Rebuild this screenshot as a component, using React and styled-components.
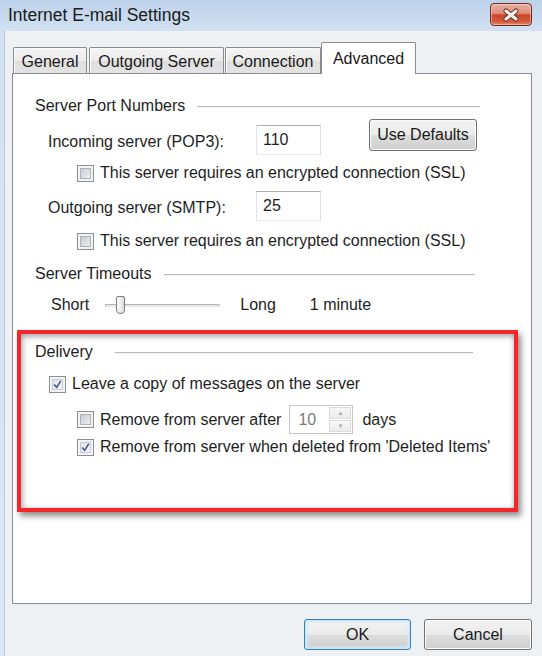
import styled, { createGlobalStyle } from 'styled-components';

const GlobalStyle = createGlobalStyle`
  html, body {
    margin: 0;
    padding: 0;
  }
  body {
    width: 542px;
    height: 656px;
    overflow: hidden;
    font-family: "Liberation Sans", Arial, sans-serif;
    color: #1e1e1e;
  }
`;

const tabs = [
  { label: 'General', width: 74, gap: 1 },
  { label: 'Outgoing Server', width: 135, gap: 2 },
  { label: 'Connection', width: 96, gap: 1 },
  { label: 'Advanced', width: 95, gap: 0, active: true },
];

const CloseIcon = () => (
  <svg width="18" height="14" viewBox="0 0 18 14">
    <path d="M4 3 L14 11 M14 3 L4 11" stroke="#7a2a1c" strokeWidth="5" strokeLinecap="round" />
    <path d="M4 3 L14 11 M14 3 L4 11" stroke="#fff" strokeWidth="3" strokeLinecap="round" />
  </svg>
);

const CheckMark = () => (
  <svg width="11" height="11" viewBox="0 0 11 11">
    <path d="M1.5 5.5 L4.5 9 L9.5 1" fill="none" stroke="#3b4f8c" strokeWidth="1.8" />
  </svg>
);

const Check = ({ checked, indent, top, children }) => (
  <CheckRow $indent={indent} $top={top}>
    <Box>
      <BoxInner $checked={checked}>{checked && <CheckMark />}</BoxInner>
    </Box>
    <CheckLabel>{children}</CheckLabel>
  </CheckRow>
);

const App = () => {
  return (
    <Window>
      <GlobalStyle />
      <TitleBar>
        <Title>Internet E-mail Settings</Title>
        <CloseButton>
          <CloseIcon />
        </CloseButton>
      </TitleBar>
      <Client>
        <TabStrip>
          {tabs.map(tab => (
            <Tab key={tab.label} $width={tab.width} $gap={tab.gap} $active={tab.active}>
              {tab.label}
            </Tab>
          ))}
        </TabStrip>
        <Panel>
          <Group>
            <GroupHeader $top={22}>
              Server Port Numbers
              <HeaderLine $gap={12} />
            </GroupHeader>
            <FieldRow $top={9}>
              <FieldLabel>Incoming server (POP3):</FieldLabel>
              <PortInput defaultValue="110" />
              <PushButton $width={108} $height={32} $lift={-6} $left={48}>
                Use Defaults
              </PushButton>
            </FieldRow>
            <Check indent={42} top={8}>
              This server requires an encrypted connection (SSL)
            </Check>
            <FieldRow $top={8}>
              <FieldLabel>Outgoing server (SMTP):</FieldLabel>
              <PortInput defaultValue="25" />
            </FieldRow>
            <Check indent={42} top={10}>
              This server requires an encrypted connection (SSL)
            </Check>
            <GroupHeader $top={13}>
              Server Timeouts
              <HeaderLine $gap={13} $end={5} />
            </GroupHeader>
            <SliderRow>
              <span>Short</span>
              <Track>
                <Thumb />
              </Track>
              <span>Long</span>
              <Timeout>1 minute</Timeout>
            </SliderRow>
          </Group>
          <Highlight>
            <GroupHeader $top={8}>
              Delivery
              <HeaderLine $gap={22} />
            </GroupHeader>
            <Check checked indent={14} top={12}>
              Leave a copy of messages on the server
            </Check>
            <SpinRow>
              <Box>
                <BoxInner />
              </Box>
              <CheckLabel>Remove from server after</CheckLabel>
              <SpinBox>
                <SpinValue>10</SpinValue>
                <SpinButtons>
                  <SpinHalf>▲</SpinHalf>
                  <SpinHalf>▼</SpinHalf>
                </SpinButtons>
              </SpinBox>
              <Days>days</Days>
            </SpinRow>
            <Check checked indent={42} top={3}>
              Remove from server when deleted from 'Deleted Items'
            </Check>
          </Highlight>
        </Panel>
        <ButtonBar>
          <PushButton $width={107} $height={31} $default>
            OK
          </PushButton>
          <PushButton $width={108} $height={31}>
            Cancel
          </PushButton>
        </ButtonBar>
      </Client>
    </Window>
  );
};

const Window = styled.div`
  width: 542px;
  height: 656px;
  display: flex;
  flex-direction: column;
  background: linear-gradient(to bottom, #bdd1ea 0, #d2e1f2 31px, #dbe7f4 100%);
  overflow: hidden;
`;

const TitleBar = styled.div`
  height: 31px;
  flex-shrink: 0;
  display: flex;
  align-items: flex-start;
  justify-content: space-between;
  padding: 0 10px 0 8px;
  box-sizing: border-box;
`;

const Title = styled.div`
  font-size: 17.5px;
  line-height: 31px;
  color: #1a1a1a;
`;

const CloseButton = styled.div`
  width: 42px;
  height: 23px;
  margin-top: 3px;
  box-sizing: border-box;
  display: flex;
  align-items: center;
  justify-content: center;
  border: 1px solid #6e2a22;
  border-radius: 4px;
  background: linear-gradient(
    to bottom,
    #ebb4a7 0%,
    #de8c78 45%,
    #c9462c 52%,
    #d45c40 85%,
    #e68d70 100%
  );
  box-shadow: inset 0 0 0 1px rgba(255, 220, 210, 0.5);
`;

const Client = styled.div`
  flex: 1;
  margin-left: 4px;
  padding: 11px 0 0 7px;
  border-left: 1px solid #b7c9df;
  background: #eef1f4;
`;

const TabStrip = styled.div`
  display: flex;
  align-items: flex-end;
  height: 31px;
`;

const Tab = styled.div`
  position: relative;
  z-index: ${p => (p.$active ? 1 : 0)};
  width: ${p => p.$width}px;
  height: ${p => (p.$active ? 32 : 26)}px;
  margin-left: ${p => p.$gap}px;
  margin-bottom: ${p => (p.$active ? -1 : 0)}px;
  box-sizing: border-box;
  display: flex;
  align-items: center;
  justify-content: center;
  padding-top: ${p => (p.$active ? 0 : 3)}px;
  border: 1px solid #898c95;
  border-bottom: none;
  border-radius: 2px 2px 0 0;
  font-size: 16px;
  color: #1a1a1a;
  background: ${p =>
    p.$active
      ? '#fff'
      : 'linear-gradient(to bottom, #f4f4f4 0%, #ececec 50%, #dedede 52%, #e4e4e4 100%)'};
  box-shadow: ${p => (p.$active ? 'none' : 'inset 1px 1px 0 #fbfbfb')};
`;

const Panel = styled.div`
  width: 520px;
  height: 531px;
  box-sizing: border-box;
  border: 1px solid #898c95;
  background: #fff;
  display: flex;
  flex-direction: column;
`;

const Group = styled.div`
  padding: 0 51px 0 22px;
`;

const GroupHeader = styled.div`
  display: flex;
  align-items: center;
  height: 20px;
  margin-top: ${p => p.$top}px;
  font-size: 16px;
  color: #1e1e1e;
  white-space: nowrap;
`;

const HeaderLine = styled.div`
  flex: 1;
  height: 1px;
  margin-left: ${p => p.$gap}px;
  margin-right: ${p => p.$end || 0}px;
  background: #b9b9b9;
  box-shadow: 0 1px 0 #f4f4f4;
`;

const FieldRow = styled.div`
  display: flex;
  align-items: center;
  height: 30px;
  margin-top: ${p => p.$top}px;
  padding-left: 13px;
  font-size: 16px;
`;

const FieldLabel = styled.span`
  width: 208px;
  padding-top: 3px;
`;

const PortInput = styled.input`
  width: 65px;
  height: 30px;
  box-sizing: border-box;
  padding: 0 0 0 6px;
  border: 1px solid;
  border-color: #abadb3 #dbdfe6 #e3e9ef #e2e3ea;
  font-family: inherit;
  font-size: 16px;
  color: #1e1e1e;
  background: #fff;
  outline: none;
`;

const PushButton = styled.div`
  width: ${p => p.$width}px;
  height: ${p => p.$height}px;
  margin-left: ${p => p.$left || 0}px;
  align-self: ${p => (p.$lift ? 'flex-start' : 'auto')};
  margin-top: ${p => p.$lift || 0}px;
  box-sizing: border-box;
  display: flex;
  align-items: center;
  justify-content: center;
  font-size: 16px;
  color: #1a1a1a;
  border: 1px solid ${p => (p.$default ? '#3c7fb1' : '#707070')};
  border-radius: 3px;
  background: linear-gradient(to bottom, #f2f2f2 0%, #ebebeb 50%, #dddddd 51%, #cfcfcf 100%);
  box-shadow: ${p =>
    p.$default ? 'inset 0 0 0 1px #c5e6f8, inset 0 0 3px 2px #d4ecf9' : 'inset 0 0 0 1px #fcfcfc'};
`;

const CheckRow = styled.div`
  display: flex;
  align-items: center;
  height: 20px;
  margin-top: ${p => p.$top}px;
  padding-left: ${p => p.$indent}px;
`;

const Box = styled.span`
  width: 17px;
  height: 17px;
  flex-shrink: 0;
  box-sizing: border-box;
  padding: 2px;
  border: 1px solid #8e8f8f;
  background: #f4f4f4;
`;

const BoxInner = styled.span`
  display: flex;
  align-items: center;
  justify-content: center;
  width: 100%;
  height: 100%;
  box-sizing: border-box;
  border: 1px solid ${p => (p.$checked ? '#c5c9d8' : '#aeb3b9')};
  background: ${p =>
    p.$checked
      ? 'linear-gradient(135deg, #dfe2ea, #f6f7f9)'
      : 'linear-gradient(135deg, #c9cdd3, #eceef0)'};
`;

const CheckLabel = styled.span`
  margin-left: 6px;
  font-size: 16px;
  color: #1e1e1e;
  white-space: nowrap;
`;

const SliderRow = styled.div`
  display: flex;
  align-items: center;
  height: 20px;
  margin-top: 11px;
  padding-left: 16px;
  font-size: 16px;
`;

const Track = styled.div`
  position: relative;
  width: 115px;
  height: 3px;
  margin: 0 20px 0 16px;
  box-sizing: border-box;
  border: 1px solid #b4b4b4;
  border-right-color: #d8d8d8;
  border-bottom-color: #e4e4e4;
  background: #ececec;
`;

const Thumb = styled.div`
  position: absolute;
  left: 10px;
  top: -9px;
  width: 9px;
  height: 18px;
  box-sizing: border-box;
  border: 1px solid #7a7a7a;
  border-radius: 2px 2px 4px 4px;
  background: linear-gradient(to right, #fdfdfd, #dedede);
`;

const Timeout = styled.span`
  margin-left: 34px;
`;

const Highlight = styled.div`
  margin: 15px 13px 0 4px;
  padding: 0 41px 51px 14px;
  border: 4px solid #f4262c;
  box-shadow: 3px 4px 6px rgba(0, 0, 0, 0.45), inset 1px 2px 6px rgba(0, 0, 0, 0.4);
`;

const SpinRow = styled.div`
  display: flex;
  align-items: center;
  height: 29px;
  margin-top: 11px;
  padding-left: 42px;
  font-size: 16px;
`;

const SpinBox = styled.div`
  display: flex;
  width: 64px;
  height: 29px;
  margin-left: 8px;
  box-sizing: border-box;
  border: 1px solid #c6c8cc;
  background: #fff;
`;

const SpinValue = styled.span`
  flex: 1;
  display: flex;
  align-items: center;
  padding-left: 8px;
  font-size: 16px;
  color: #7a7a7a;
`;

const SpinButtons = styled.div`
  width: 22px;
  margin: 1px;
  display: flex;
  flex-direction: column;
  gap: 1px;
`;

const SpinHalf = styled.span`
  flex: 1;
  display: flex;
  align-items: center;
  justify-content: center;
  font-size: 6px;
  color: #a6a6a6;
  border: 1px solid #dcdcdc;
  background: linear-gradient(to bottom, #f7f7f7, #ececec);
`;

const Days = styled.span`
  margin-left: 9px;
`;

const ButtonBar = styled.div`
  width: 520px;
  display: flex;
  justify-content: flex-end;
  gap: 13px;
  margin-top: 15px;
`;

export default App;
